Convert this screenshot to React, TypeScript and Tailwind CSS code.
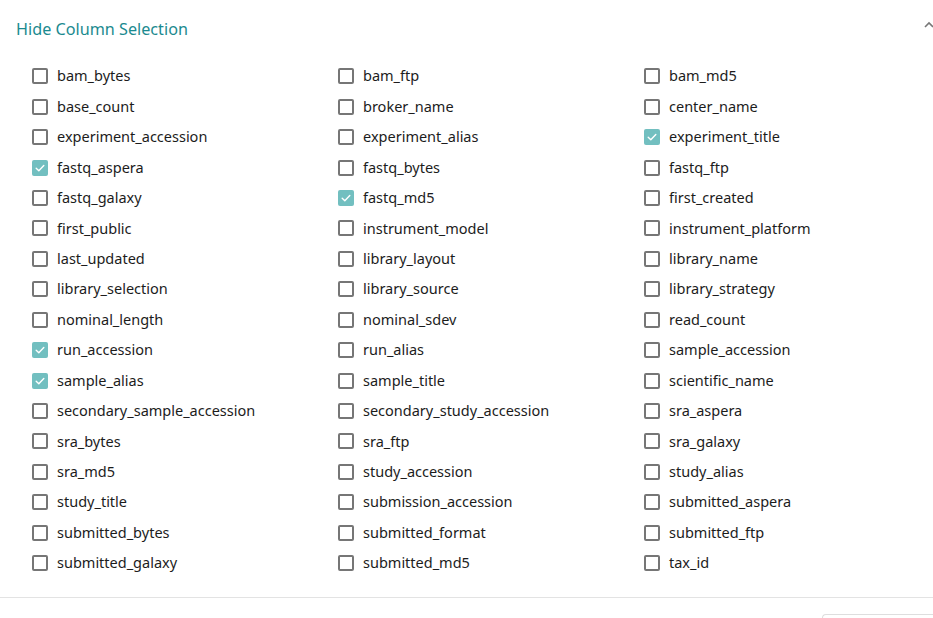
const columns: [string, boolean][][] = [
  [["bam_bytes", false], ["bam_ftp", false], ["bam_md5", false]],
  [["base_count", false], ["broker_name", false], ["center_name", false]],
  [["experiment_accession", false], ["experiment_alias", false], ["experiment_title", true]],
  [["fastq_aspera", true], ["fastq_bytes", false], ["fastq_ftp", false]],
  [["fastq_galaxy", false], ["fastq_md5", true], ["first_created", false]],
  [["first_public", false], ["instrument_model", false], ["instrument_platform", false]],
  [["last_updated", false], ["library_layout", false], ["library_name", false]],
  [["library_selection", false], ["library_source", false], ["library_strategy", false]],
  [["nominal_length", false], ["nominal_sdev", false], ["read_count", false]],
  [["run_accession", true], ["run_alias", false], ["sample_accession", false]],
  [["sample_alias", true], ["sample_title", false], ["scientific_name", false]],
  [["secondary_sample_accession", false], ["secondary_study_accession", false], ["sra_aspera", false]],
  [["sra_bytes", false], ["sra_ftp", false], ["sra_galaxy", false]],
  [["sra_md5", false], ["study_accession", false], ["study_alias", false]],
  [["study_title", false], ["submission_accession", false], ["submitted_aspera", false]],
  [["submitted_bytes", false], ["submitted_format", false], ["submitted_ftp", false]],
  [["submitted_galaxy", false], ["submitted_md5", false], ["tax_id", false]],
]

function Checkbox({ checked }: { checked: boolean }) {
  if (checked) {
    return (
      <span className="w-[16px] h-[16px] rounded-[2px] bg-[#72bfc0] flex items-center justify-center shrink-0">
        <svg width="12" height="12" viewBox="0 0 12 12" fill="none">
          <path d="M2.2 6.3 L4.8 8.8 L9.8 3.4" stroke="white" strokeWidth="1.4" strokeLinecap="round" strokeLinejoin="round" />
        </svg>
      </span>
    )
  }
  return <span className="w-[16px] h-[16px] rounded-[2px] border-2 border-[#767676] bg-white shrink-0" />
}

export default function App() {
  return (
    <div className="w-full overflow-hidden bg-white min-h-[618px]" style={{ fontFamily: '"Noto Sans", "Open Sans", sans-serif' }}>
      <div className="w-[942px]">
        {/* Header */}
        <div className="flex items-center justify-between pl-4 pr-[8px] pt-[15px] h-[44px]">
          <span className="text-[16.2px] text-[#1b8a8f]">Hide Column Selection</span>
          <svg width="10" height="7" viewBox="0 0 10 7" fill="none" className="-mt-[10px]">
            <path d="M1 6 L5 2 L9 6" stroke="#777" strokeWidth="1.6" />
          </svg>
        </div>

        {/* Column checkboxes */}
        <div className="pl-[32px] pt-[21px] pb-[23px] flex flex-col gap-[8px]">
          {columns.map((row, i) => (
            <div key={i} className="grid grid-cols-[306px_306px_1fr]">
              {row.map(([name, checked]) => (
                <label key={name} className="flex items-center gap-[9px] h-[22.45px] text-[14.5px] text-[#1c1c1c]">
                  <Checkbox checked={checked} />
                  <span>{name}</span>
                </label>
              ))}
            </div>
          ))}
        </div>
      </div>

      {/* Footer */}
      <div className="border-t border-[#e3e3e3] h-[30px] flex justify-end pt-[16px] pr-0">
        <div className="w-[120px] h-[20px] border-l border-t border-[#dedede] rounded-tl-[4px] -mr-[9px]" />
      </div>
    </div>
  )
}
